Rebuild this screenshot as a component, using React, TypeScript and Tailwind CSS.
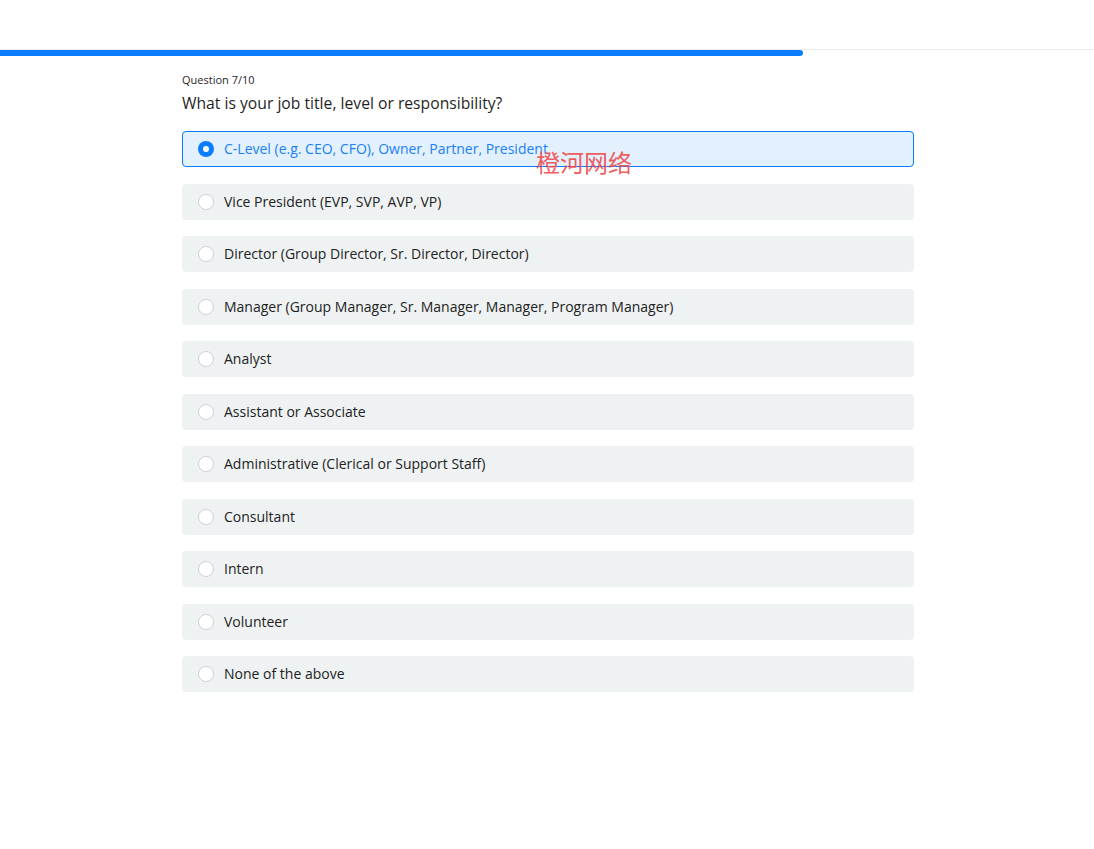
import React from "react";

const options = [
  "C-Level (e.g. CEO, CFO), Owner, Partner, President",
  "Vice President (EVP, SVP, AVP, VP)",
  "Director (Group Director, Sr. Director, Director)",
  "Manager (Group Manager, Sr. Manager, Manager, Program Manager)",
  "Analyst",
  "Assistant or Associate",
  "Administrative (Clerical or Support Staff)",
  "Consultant",
  "Intern",
  "Volunteer",
  "None of the above",
];

export default function App() {
  return (
    <div className="relative min-h-[849px] w-full bg-white" style={{ fontFamily: '"Open Sans", "Noto Sans", sans-serif' }}>
      <div className="h-[49px]" />
      <div className="border-t border-[#ececec]">
        <div className="h-[6px] w-[803px] rounded-r-full bg-[#0a7cff]" />
      </div>
      <div className="ml-[182px] w-[732px] pt-[16px]">
        <div className="text-[11px] leading-[16px] text-[#1f1f1f]">Question 7/10</div>
        <div className="mt-[4px] text-[15.7px] leading-[22px] text-[#1f1f1f]">What is your job title, level or responsibility?</div>
        <div className="mt-[17px] flex flex-col gap-[16.5px]">
          {options.map((o, i) => {
            const sel = i === 0;
            return (
              <div
                key={o}
                className={
                  sel
                    ? "flex h-[36px] items-center rounded-[4px] border border-[#0a7cff] bg-[#e3f1fe] pl-[15px] text-[#1a80f4]"
                    : "flex h-[36px] items-center rounded-[4px] border border-transparent bg-[#eff2f3] pl-[15px] text-[#222222]"
                }
              >
                {sel ? (
                  <span className="flex h-[16px] w-[16px] items-center justify-center rounded-full bg-[#0a7cff]">
                    <span className="h-[6px] w-[6px] rounded-full bg-white" />
                  </span>
                ) : (
                  <span className="h-[16px] w-[16px] rounded-full border border-[#cdd2d6] bg-white" />
                )}
                <span className="ml-[10px] text-[14px] leading-[20px]">{o}</span>
              </div>
            );
          })}
        </div>
      </div>
      <div
        className="absolute left-[536px] top-[146px] text-[24px] leading-[32px] text-[#f04848]/90"
        style={{ fontFamily: '"Noto Sans CJK SC", sans-serif' }}
      >
        橙河网络
      </div>
    </div>
  );
}
